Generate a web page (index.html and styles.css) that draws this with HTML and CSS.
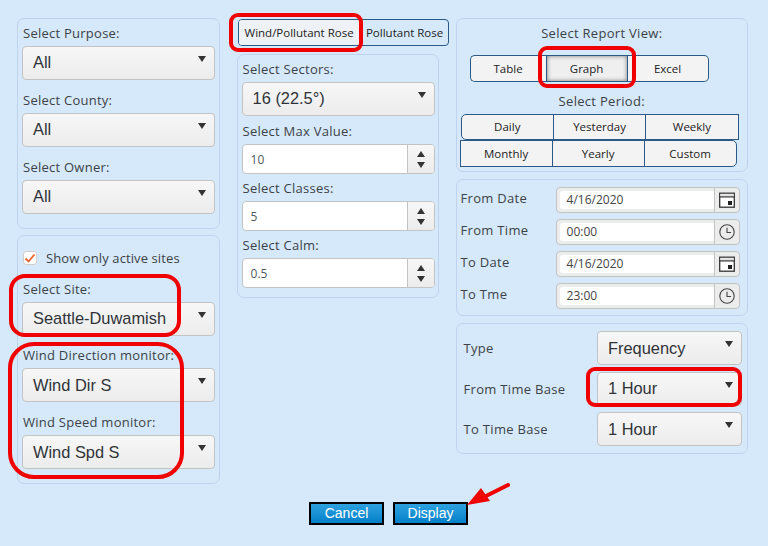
FILE: index.html
```html
<!DOCTYPE html>
<html lang="en">
<head>
<meta charset="utf-8">
<title>Rose report</title>
<link rel="stylesheet" href="styles.css">
</head>
<body>
<main class="page">
  <div class="columns">
    <section class="col col-left">
      <div class="panel panel-filters">
        <div class="field"><div class="label">Select Purpose:</div><div class="select"><span>All</span><i class="caret"></i></div></div>
        <div class="field"><div class="label">Select County:</div><div class="select"><span>All</span><i class="caret"></i></div></div>
        <div class="field"><div class="label">Select Owner:</div><div class="select"><span>All</span><i class="caret"></i></div></div>
      </div>
      <div class="panel panel-site">
        <div class="check-row">
          <span class="check"><svg width="12" height="12" viewBox="0 0 12 12"><path d="M1.5 6.5 L4.5 9.5 L10.5 2.5" fill="none" stroke="#e9622f" stroke-width="1.8"/></svg></span>
          <span class="check-label">Show only active sites</span>
        </div>
        <div class="field field-site"><div class="label">Select Site:</div><div class="select"><span>Seattle-Duwamish</span><i class="caret"></i></div></div>
        <div class="field"><div class="label">Wind Direction monitor:</div><div class="select select-wind"><span>Wind Dir S</span><i class="caret"></i></div></div>
        <div class="field"><div class="label">Wind Speed monitor:</div><div class="select select-wind"><span>Wind Spd S</span><i class="caret"></i></div></div>
      </div>
    </section>

    <section class="col col-mid">
      <div class="tabs">
        <div class="tab tab-active">Wind/Pollutant Rose</div>
        <div class="tab">Pollutant Rose</div>
      </div>
      <div class="panel panel-rose">
        <div class="field"><div class="label">Select Sectors:</div><div class="select"><span>16 (22.5°)</span><i class="caret"></i></div></div>
        <div class="field-num"><div class="label">Select Max Value:</div><div class="spin"><span class="spin-val">10</span><span class="spin-btn"><i class="up"></i><i class="down"></i></span></div></div>
        <div class="field-num"><div class="label">Select Classes:</div><div class="spin"><span class="spin-val">5</span><span class="spin-btn"><i class="up"></i><i class="down"></i></span></div></div>
        <div class="field-num"><div class="label">Select Calm:</div><div class="spin"><span class="spin-val">0.5</span><span class="spin-btn"><i class="up"></i><i class="down"></i></span></div></div>
      </div>
    </section>

    <section class="col col-right">
      <div class="panel panel-view">
        <div class="center-label">Select Report View:</div>
        <div class="views">
          <div class="view view-first">Table</div>
          <div class="view view-on">Graph</div>
          <div class="view view-last">Excel</div>
        </div>
        <div class="center-label period-label">Select Period:</div>
        <div class="periods periods-one">
          <div class="period p-tl">Daily</div><div class="period">Yesterday</div><div class="period">Weekly</div>
        </div>
        <div class="periods periods-two">
          <div class="period">Monthly</div><div class="period">Yearly</div><div class="period p-br">Custom</div>
        </div>
      </div>
      <div class="panel panel-dates">
        <div class="date-row"><span class="date-label">From Date</span><div class="picker"><span class="picker-val">4/16/2020</span><span class="picker-btn"><svg class="ico" viewBox="0 0 16 16"><use href="#cal"/></svg></span></div></div>
        <div class="date-row"><span class="date-label">From Time</span><div class="picker"><span class="picker-val">00:00</span><span class="picker-btn"><svg class="ico" viewBox="0 0 16 16"><use href="#clock"/></svg></span></div></div>
        <div class="date-row"><span class="date-label">To Date</span><div class="picker"><span class="picker-val">4/16/2020</span><span class="picker-btn"><svg class="ico" viewBox="0 0 16 16"><use href="#cal"/></svg></span></div></div>
        <div class="date-row"><span class="date-label">To Tme</span><div class="picker"><span class="picker-val">23:00</span><span class="picker-btn"><svg class="ico" viewBox="0 0 16 16"><use href="#clock"/></svg></span></div></div>
      </div>
      <div class="panel panel-type">
        <div class="type-row"><span class="type-label">Type</span><div class="select select-type"><span>Frequency</span><i class="caret"></i></div></div>
        <div class="type-row"><span class="type-label">From Time Base</span><div class="select select-type"><span>1 Hour</span><i class="caret"></i></div></div>
        <div class="type-row"><span class="type-label">To Time Base</span><div class="select select-type"><span>1 Hour</span><i class="caret"></i></div></div>
      </div>
    </section>
  </div>

  <div class="actions">
    <button class="btn" type="button">Cancel</button>
    <button class="btn" type="button">Display</button>
  </div>

  <div class="mark mark-tab"></div>
  <div class="mark mark-graph"></div>
  <div class="mark mark-hour"></div>
  <div class="mark mark-site"></div>
  <div class="mark mark-wind"></div>
  <svg class="arrow" viewBox="0 0 50 30" width="50" height="30"><path d="M46 3 L22 15" stroke="#f00000" stroke-width="4" stroke-linecap="round"/><path d="M5 23 L19 6 L28 19 Z" fill="#f00000"/></svg>
</main>
<svg class="defs" width="0" height="0">
  <defs>
    <g id="cal"><rect x="0.7" y="1.2" width="14.6" height="14" fill="#fff" stroke="#333" stroke-width="1.3"/><rect x="1.4" y="1.9" width="13.2" height="2.6" fill="#e4e4e4"/><path d="M1 4.9 H15" stroke="#333" stroke-width="1.2"/><rect x="9" y="9" width="4" height="4" fill="#222"/></g>
    <g id="clock"><circle cx="8" cy="8" r="7.2" fill="none" stroke="#444" stroke-width="1.1"/><path d="M8 3.8 V8.5 H12" fill="none" stroke="#444" stroke-width="1.1"/></g>
  </defs>
</svg>
</body>
</html>
```
FILE: styles.css
```css
* { box-sizing: border-box; }
html, body { margin: 0; padding: 0; }
body { background: #d6e9fa; width: 768px; height: 546px; overflow: hidden; color: #3c4248; font-family: "Open Sans", "Liberation Sans", sans-serif; font-size: 13px; }
.page { position: relative; width: 768px; height: 546px; padding: 18px 20px 0 17px; }
.columns { display: flex; align-items: flex-start; }
.col { display: flex; flex-direction: column; }
.col-left { width: 203px; gap: 6px; }
.col-mid { width: 202px; margin-left: 17px; }
.col-right { width: 293px; margin-left: 17px; gap: 7px; }
.panel { border: 1px solid #bfd3ef; border-radius: 7px; }
.panel-filters { height: 211px; padding: 4px 4px 0; }
.panel-site { height: 249px; padding: 12px 4px 0; }
.field { margin-bottom: 10px; }
.field-site { margin-bottom: 9px; }
.label { height: 20px; line-height: 20px; margin-bottom: 3px; padding-left: 1px; white-space: nowrap; letter-spacing: 0.25px; }
.select { position: relative; display: flex; align-items: center; height: 34px; padding: 0 0 2px 10px; border: 1px solid #c3c3c3; border-radius: 4px; background: linear-gradient(#f7f7f7, #ececec); color: #2f3338; font-family: "Liberation Sans", Arial, sans-serif; font-size: 16.4px; }
.select-wind { padding-bottom: 0; }
.caret { position: absolute; right: 8px; top: 9px; width: 0; height: 0; border-left: 4.5px solid transparent; border-right: 4.5px solid transparent; border-top: 6px solid #333; }
.check-row { display: flex; align-items: center; height: 20px; margin: 0 0 11px 1px; }
.check { display: flex; align-items: center; justify-content: center; width: 14px; height: 14px; background: #fff; border: 1px solid #cfcfcf; border-radius: 3px; }
.check-label { margin-left: 9px; letter-spacing: 0.1px; }

.tabs { display: flex; height: 27px; margin: 1px 0 8px 1px; width: 211px; border: 1px solid #2a5a85; border-radius: 4px; overflow: hidden; }
.tab { display: flex; align-items: center; justify-content: center; font-size: 11.5px; color: #222; white-space: nowrap; flex: 0 0 88px; }
.tab-active { flex: 0 0 122px; background: #eef2f6; border-right: 1px solid #2a5a85; }
.panel-rose { height: 244px; padding: 4px 3px 0 4px; }
.panel-rose .field { margin-bottom: 5px; }
.field-num { margin-bottom: 4px; }
.spin { display: flex; height: 30px; border: 1px solid #c3c3c3; border-radius: 4px; overflow: hidden; background: #fff; }
.spin-val { flex: 1; padding: 0 8px; line-height: 29px; font-size: 12px; color: #4f5a60; }
.spin-btn { display: flex; flex-direction: column; align-items: center; justify-content: center; gap: 5px; width: 27px; border-left: 1px solid #c3c3c3; background: linear-gradient(#f7f7f7, #ececec); }
.up { width: 0; height: 0; border-left: 4.5px solid transparent; border-right: 4.5px solid transparent; border-bottom: 6px solid #333; }
.down { width: 0; height: 0; border-left: 4.5px solid transparent; border-right: 4.5px solid transparent; border-top: 6px solid #333; }

.panel-view { height: 154px; padding: 4px 4px 0; }
.center-label { text-align: center; height: 20px; line-height: 20px; letter-spacing: 0.3px; }
.views { display: flex; width: 239px; height: 27px; margin: 12px 0 0 9px; font-size: 11.5px; color: #222; }
.view { display: flex; align-items: center; justify-content: center; background: #f3f3f3; border: 1px solid #2a5a85; }
.view-first { width: 76px; border-right: 0; border-radius: 5px 0 0 5px; }
.view-on { width: 82px; box-shadow: inset 0 0 4px #777; background: #efefef; }
.view-last { width: 81px; border-left: 0; border-radius: 0 5px 5px 0; }
.period-label { margin-top: 9px; }
.periods { display: flex; width: 278px; height: 26px; margin: 3px 0 0; font-size: 11.5px; color: #222; }
.periods-one .period { padding-bottom: 2px; }
.periods-two { width: 277px; height: 27px; margin: 0 0 0 -1px; }
.period { flex: 1; display: flex; align-items: center; justify-content: center; background: #f3f3f3; border: 1px solid #2a5a85; margin-left: -1px; }
.period:first-child { margin-left: 0; }
.p-tl { border-radius: 5px 0 0 5px; }
.p-br { border-radius: 0 5px 5px 0; }

.panel-dates { height: 137px; padding: 7px 7px 0 4px; }
.date-row { display: flex; align-items: center; height: 26px; margin-bottom: 6px; }
.date-label { width: 95px; letter-spacing: 0.3px; padding-bottom: 4px; }
.picker { display: flex; width: 184px; height: 26px; border: 1px solid #c3c3c3; border-radius: 4px; background: #ececec; }
.picker-val { flex: 1; margin: 3px 0 3px 3px; padding-left: 7px; background: #fff; font-size: 12px; color: #444; line-height: 18px; border-radius: 2px; }
.picker-btn { display: flex; align-items: center; justify-content: center; width: 25px; border-left: 1px solid #c3c3c3; }
.ico { width: 16px; height: 16px; }

.panel-type { height: 131px; padding: 7px 5px 0 7px; }
.type-row { display: flex; align-items: center; justify-content: space-between; margin-bottom: 6.5px; }
.type-label { letter-spacing: 0.3px; }
.select-type { width: 145px; padding: 0 0 0 10px; }

.actions { display: flex; justify-content: flex-start; gap: 9px; margin: 18px 0 0 292px; }
.btn { width: 75px; height: 23px; padding: 0 0 2px; border: 2px solid #000; border-radius: 0; background: linear-gradient(#2fa2e0, #0380c9); color: #fff; font-family: "Liberation Sans", Arial, sans-serif; font-size: 14px; }

.mark { position: absolute; border: 4px solid #f00000; border-radius: 9px; }
.mark-tab { left: 229px; top: 13px; width: 134px; height: 39px; }
.mark-graph { left: 538px; top: 46px; width: 98px; height: 42px; }
.mark-hour { left: 586px; top: 367px; width: 156px; height: 40px; }
.mark-site { left: 9px; top: 274px; width: 172px; height: 63px; border-radius: 16px; }
.mark-wind { left: 8px; top: 342px; width: 176px; height: 137px; border-radius: 26px; }
.arrow { position: absolute; left: 462px; top: 482px; }
.defs { position: absolute; }
```
